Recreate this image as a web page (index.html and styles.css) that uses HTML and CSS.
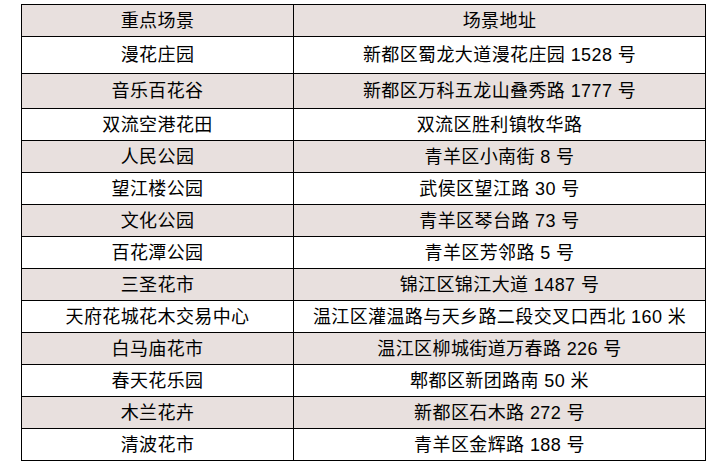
FILE: index.html
```html
<!DOCTYPE html>
<html lang="zh">
<head>
<meta charset="utf-8">
<title>重点场景</title>
<link rel="stylesheet" href="styles.css">
</head>
<body>
<table class="venues">
  <colgroup><col class="c-name"><col class="c-addr"></colgroup>
  <tr class="head shade"><td>重点场景</td><td>场景地址</td></tr>
  <tr class="r1"><td>漫花庄园</td><td>新都区蜀龙大道漫花庄园 1528 号</td></tr>
  <tr class="r2 shade"><td>音乐百花谷</td><td>新都区万科五龙山叠秀路 1777 号</td></tr>
  <tr><td>双流空港花田</td><td>双流区胜利镇牧华路</td></tr>
  <tr class="shade"><td>人民公园</td><td>青羊区小南街 8 号</td></tr>
  <tr><td>望江楼公园</td><td>武侯区望江路 30 号</td></tr>
  <tr class="shade"><td>文化公园</td><td>青羊区琴台路 73 号</td></tr>
  <tr><td>百花潭公园</td><td>青羊区芳邻路 5 号</td></tr>
  <tr class="shade"><td>三圣花市</td><td>锦江区锦江大道 1487 号</td></tr>
  <tr><td>天府花城花木交易中心</td><td>温江区灌温路与天乡路二段交叉口西北 160 米</td></tr>
  <tr class="shade"><td>白马庙花市</td><td>温江区柳城街道万春路 226 号</td></tr>
  <tr><td>春天花乐园</td><td>郫都区新团路南 50 米</td></tr>
  <tr class="shade"><td>木兰花卉</td><td>新都区石木路 272 号</td></tr>
  <tr><td>清波花市</td><td>青羊区金辉路 188 号</td></tr>
</table>
</body>
</html>
```
FILE: styles.css
```css
html, body {
  margin: 0;
  padding: 0;
  background: #ffffff;
}
body {
  padding: 4px 0 0 21px;
  font-family: "Liberation Sans", "Noto Sans CJK SC", sans-serif;
  font-size: 18px;
  color: #000;
}
.venues {
  border-collapse: collapse;
  width: 684px;
  table-layout: fixed;
}
.c-name { width: 272px; }
.c-addr { width: 412px; }
.venues td {
  border: 1px solid #000;
  text-align: center;
  vertical-align: middle;
  padding: 0;
  height: 31px;
  line-height: 20px;
  letter-spacing: 0.4px;
  white-space: nowrap;
}
.venues tr.r1 td { height: 36px; }
.venues tr.r2 td { height: 34px; }
.shade td { background: #e8e0de; }
```
